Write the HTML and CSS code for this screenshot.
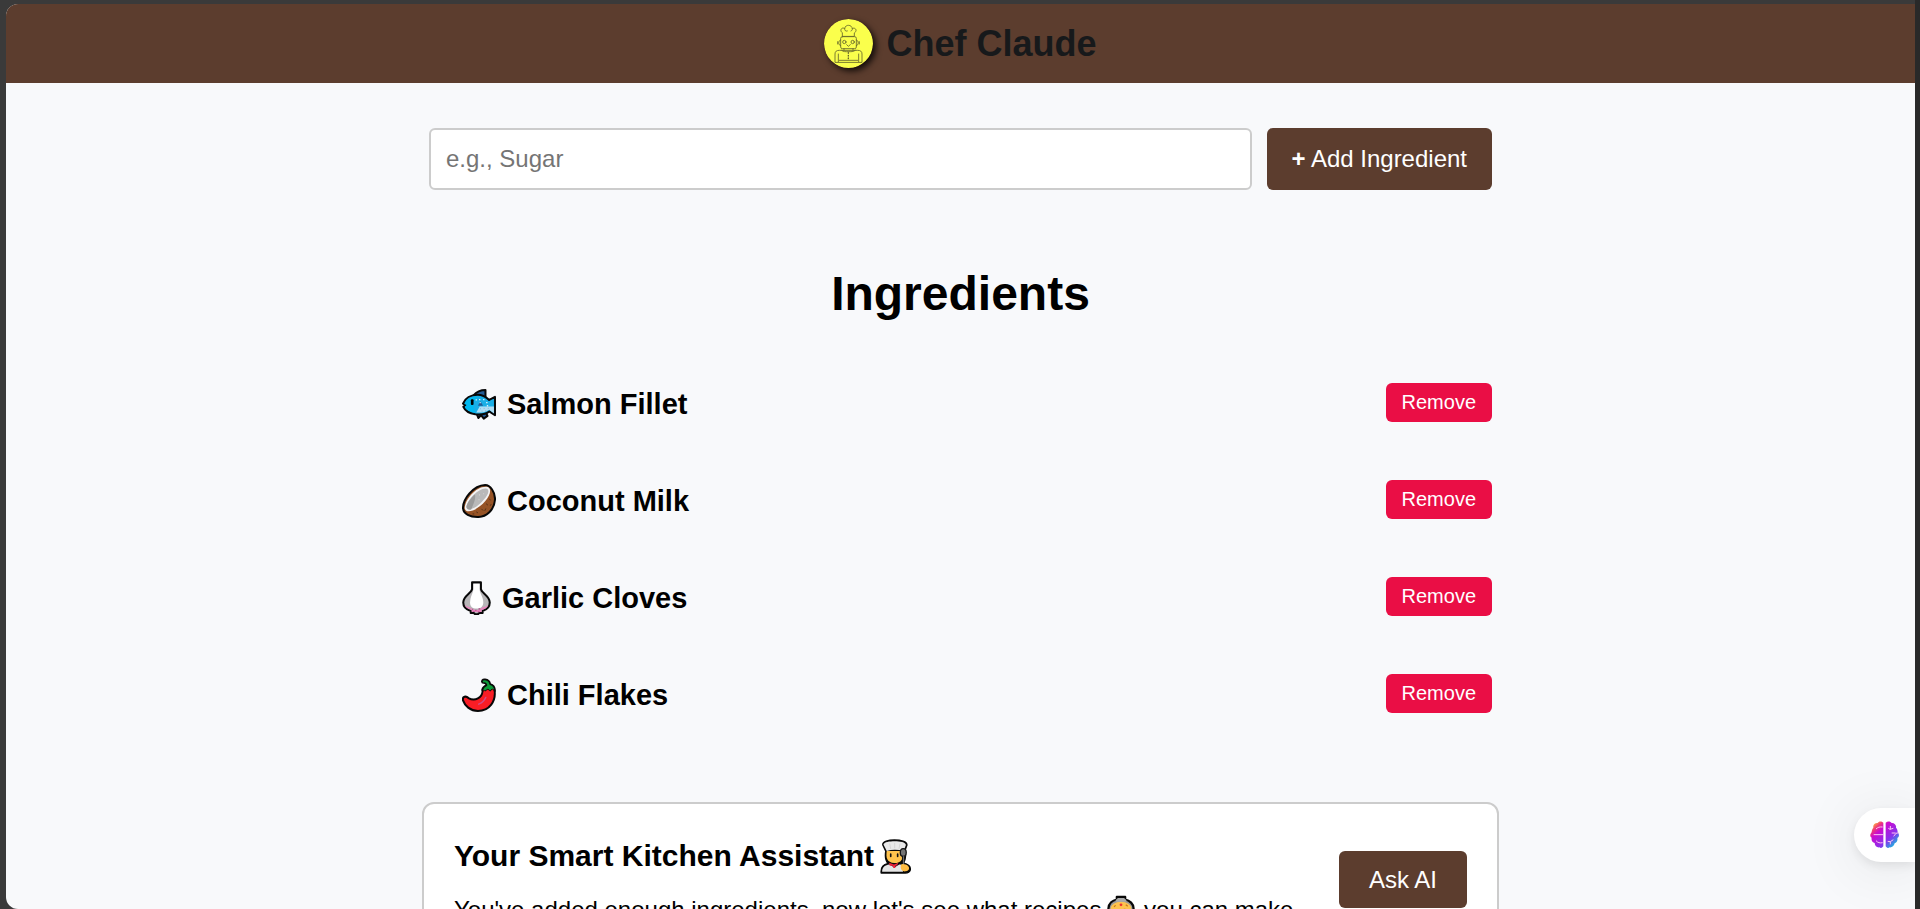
FILE: index.html
```html
<!DOCTYPE html>
<html lang="en">
<head>
    <meta charset="UTF-8">
    <meta name="viewport" content="width=device-width, initial-scale=1.0">
    <title>Chef Claude</title>
    <link rel="stylesheet" href="styles.css">
</head>
<body>
    <div class="window">
        <header>
            <svg class="logo" viewBox="0 0 147 147" aria-hidden="true">
                <circle cx="73.5" cy="73.5" r="73.5" fill="#faff4c"/>
                <g fill="none" stroke="#68692c" stroke-width="2.6" stroke-linecap="round" stroke-linejoin="round">
                    <path d="M55 51V41C49 38 49 28 57 27C60 27 61 28 62 29C63 21 69 19 73 19C80 19 84 23 85 29C91 25 97 30 96 35C95 39 92 41 91 42V51ZM62 29C61 34 65 38 70 36M85 29C86 32 84 35 81 36"/>
                    <rect x="50" y="53" width="47" height="36" rx="5"/>
                    <path d="M50 63C42 63 42 80 50 80M97 63C105 63 105 80 97 80M41 68V75M106 68V75"/>
                    <circle cx="61" cy="69" r="5"/>
                    <circle cx="86" cy="69" r="5"/>
                    <path d="M68 77L73 82L79 77M60 89V94M87 89V94"/>
                    <path d="M33 129V105C33 97 38 94 46 94H101C109 94 114 97 114 105V129ZM43 128V105M104 128V105M46 124H101M53 94C58 99 65 98 72 98C81 98 88 99 94 94"/>
                    <path d="M73 101V103M73 109V111M73 117V119" stroke-width="4"/>
                </g>
            </svg>
            <span class="brand">Chef Claude</span>
        </header>

        <main>
            <form class="add-form" onsubmit="return false">
                <input type="text" name="ingredient" placeholder="e.g., Sugar" aria-label="Add ingredient">
                <button type="submit"><b>+</b> Add Ingredient</button>
            </form>

            <section class="ingredients">
                <h1>Ingredients</h1>
                <ul>
                    <li>
                        <h3>
                            <svg class="emoji" viewBox="0 0 100 100" aria-hidden="true">
                                <g stroke="#080808" stroke-width="6" stroke-linejoin="round">
                                    <path d="M34 25C43 14 57 9 69 9V31Z" fill="#245b94"/>
                                    <path d="M42 75L48 91L56 83L64 93L75 85L70 74Z" fill="#245b94"/>
                                    <path d="M3 49C9 33 26 23 46 23C61 23 70 29 80 38L97 29V83L80 72C70 80 55 82 39 80C20 77 8 67 4 58L10 53Z" fill="#19aee6"/>
                                </g>
                                <path d="M7 50C14 34 29 28 45 28C34 41 30 57 39 76C23 74 12 67 8 59L15 53Z" fill="#00b9f0"/>
                                <path d="M52 57H94V78L80 67C70 75 57 76 42 75Z" fill="#afddf4"/>
                                <path d="M47 55L54 42L62 55Z" fill="#245b94"/>
                                <rect x="26" y="36" width="8" height="17" rx="3"/>
                                <path d="M40 38H44M50 37H54M62 37H66M52 46H55M71 46H75M73 55H77" stroke="#d7f4ff" stroke-width="4"/>
                                <path d="M53 64H55M64 63H66M76 63H78M58 71H60M69 70H71" stroke="#538dba" stroke-width="2"/>
                            </svg>
                            <span>Salmon Fillet</span>
                        </h3>
                        <button class="remove" type="button">Remove</button>
                    </li>
                    <li>
                        <h3>
                            <svg class="emoji" viewBox="0 0 100 100" aria-hidden="true">
                                <path d="M3 72C2 45 33 4 68 3C83 3 98 24 97 46C95 76 72 98 45 97C24 97 5 89 3 72Z" fill="#965325" stroke="#080808" stroke-width="6"/>
                                <path d="M8 72C8 47 40 7 71 8C89 8 85 32 68 51C48 75 13 91 8 72Z" fill="#f4f3f3"/>
                                <path d="M13 68C15 48 47 13 69 13C84 14 78 32 63 47C45 69 18 83 13 68Z" fill="#b9b9b9"/>
                                <path d="M38 31C42 43 33 61 27 75C18 77 13 73 13 67C15 56 26 41 38 31Z" fill="#9b9b9b"/>
                                <path d="M51 32H53M49 46H51M63 29H65" stroke="#dedede" stroke-width="3"/>
                                <path d="M80 43L84 48M71 58L76 62M86 59L83 64M57 73L62 78M70 72L67 79M42 82L47 85M31 88H36" stroke="#3a2412" stroke-width="2"/>
                            </svg>
                            <span>Coconut Milk</span>
                        </h3>
                        <button class="remove" type="button">Remove</button>
                    </li>
                    <li>
                        <h3>
                            <svg class="emoji emoji-narrow" viewBox="0 0 84 100" aria-hidden="true">
                                <path d="M29 4H55V24C57 36 81 44 81 63C81 75 72 84 60 88L60 94H50L46 98H38L34 94H25V88C12 84 3 75 3 63C3 44 27 36 29 24Z" fill="#b8b6b8" stroke="#080808" stroke-width="6" stroke-linejoin="round"/>
                                <path d="M33 8H51V25C53 39 62 47 62 63C62 74 55 81 43 81C29 81 23 74 23 63C23 48 31 37 33 25Z" fill="#fff"/>
                                <path d="M7 70C14 77 19 75 26 80C35 87 50 87 58 79C65 75 71 77 77 70C74 79 67 83 57 85V91H28V85C17 82 10 79 7 70Z" fill="#e884bd"/>
                                <path d="M29 83H32M38 86H42M48 82H53M33 90H36M46 91H51" stroke="#a94c84" stroke-width="3"/>
                            </svg>
                            <span>Garlic Cloves</span>
                        </h3>
                        <button class="remove" type="button">Remove</button>
                    </li>
                    <li>
                        <h3>
                            <svg class="emoji" viewBox="0 0 100 100" aria-hidden="true">
                                <path d="M61 36C67 26 86 24 95 34C102 68 80 97 47 97C24 97 8 81 3 66C0 54 12 52 19 59C38 69 60 59 61 36Z" fill="#f91d25" stroke="#080808" stroke-width="6" stroke-linejoin="round"/>
                                <path d="M59 35C61 28 65 24 72 21C71 15 67 14 60 14C56 9 60 3 68 4C77 5 82 11 83 18C92 20 97 27 97 38L89 34L83 40L76 34L68 40Z" fill="#0b9936" stroke="#080808" stroke-width="5" stroke-linejoin="round"/>
                                <path d="M64 35C64 46 61 57 52 64L84 64C92 55 94 45 92 34L89 34L83 40L76 34L68 40Z" fill="#f91d25"/>
                                <path d="M49 77C58 74 66 66 70 57" fill="none" stroke="#d34b86" stroke-width="4" stroke-linecap="round"/>
                            </svg>
                            <span>Chili Flakes</span>
                        </h3>
                        <button class="remove" type="button">Remove</button>
                    </li>
                </ul>
            </section>

            <section class="assistant">
                <div class="assistant-text">
                    <h2>
                        <span>Your Smart Kitchen Assistant</span>
                        <svg class="cook" viewBox="0 0 96 106" aria-hidden="true">
                            <path d="M3 103C1 84 10 77 24 74C15 64 15 48 17 37L8 18C6 8 26 3 43 3C61 3 83 7 81 19L74 38C79 52 76 65 70 73C84 75 94 83 91 95C89 102 84 103 76 103Z" fill="#080808" stroke="#080808" stroke-width="4" stroke-linejoin="round"/>
                            <path d="M20 36C17 57 20 70 43 73C65 72 72 59 70 36Z" fill="#ffc34d"/>
                            <path d="M10 17C12 9 28 7 44 7C61 7 77 10 78 18L71 36C54 31 35 31 20 36Z" fill="#e9e9e9"/>
                            <path d="M29 14L32 30M60 14L57 30M44 12V28" stroke="#d6d6d6" stroke-width="3"/>
                            <path d="M6 99C6 84 15 79 28 77L43 86L58 77L69 78V99Z" fill="#e5e5e5"/>
                            <path d="M27 72L42 77L55 72L51 80L46 81V88H40L38 81L29 81Z" fill="#ee233b"/>
                            <path d="M32 46V53M53 46V53" stroke="#111" stroke-width="5" stroke-linecap="round"/>
                            <path d="M70 47V88" stroke="#161616" stroke-width="8"/>
                            <ellipse cx="70" cy="41" rx="9" ry="12" fill="#747474" stroke="#161616" stroke-width="4"/>
                            <path d="M71 52V79" stroke="#777" stroke-width="3"/>
                            <path d="M63 79C67 73 73 78 78 77C91 82 91 96 77 98C67 99 60 92 63 79Z" fill="#ffbd43"/>
                        </svg>
                    </h2>
                    <p>You've added enough ingredients, now let's see what recipes<svg class="pot" viewBox="0 0 100 100" aria-hidden="true">
                        <path d="M5 48C6 30 20 19 35 16V7H65V16C81 19 95 32 95 48L90 76C80 94 20 94 10 76Z" fill="#999" stroke="#080808" stroke-width="8" stroke-linejoin="round"/>
                        <ellipse cx="50" cy="48" rx="37" ry="24" fill="#ffc34d"/>
                        <path d="M30 19L39 11H61L70 19L66 24H34Z" fill="#aaa"/>
                        <circle cx="50" cy="35" r="5" fill="#e33"/>
                        <path d="M25 42L31 37M67 35L74 40M36 52H44M60 51H66" stroke="#c8761a" stroke-width="4"/>
                    </svg> you can make</p>
                </div>
                <button class="ask" type="button">Ask AI</button>
            </section>
        </main>

        <button class="brain-tab" type="button" aria-label="Open assistant">
            <svg viewBox="0 0 87 84" aria-hidden="true">
                <defs>
                    <linearGradient id="brain" x1="0" y1="0" x2="1" y2="1">
                        <stop offset="0.1" stop-color="#ffb03b"/>
                        <stop offset="0.22" stop-color="#ee3979"/>
                        <stop offset="0.34" stop-color="#cb0bd0"/>
                        <stop offset="0.66" stop-color="#8734ed"/>
                        <stop offset="0.86" stop-color="#25a9df"/>
                    </linearGradient>
                </defs>
                <path fill="url(#brain)" d="M40 5C34-1 25 1 23 6C15 5 8 12 10 20C5 25 6 31 4 35C-1 40 0 47 5 50C3 60 8 65 14 66C14 75 21 80 28 79C34 83 38 79 40 76ZM47 5C53-1 62 1 65 6C73 5 80 13 78 20C84 25 81 30 84 35C89 41 87 48 82 51C84 60 79 65 74 67C72 76 65 80 59 79C53 83 49 79 47 76Z"/>
                <path d="M11 41H40M18 24C23 19 29 17 38 18M18 59C23 65 30 67 38 65M55 22L60 25L70 22M61 25V15M86 35L78 37L71 46M65 36H77M53 61L61 62L70 56M61 62V70" fill="none" stroke="#ffc5f3" stroke-width="3"/>
            </svg>
        </button>
    </div>
</body>
</html>
```

FILE: styles.css
```css
* {
    box-sizing: border-box;
}

body {
    margin: 0;
    height: 100vh;
    padding: 4px 5px 0 6px;
    overflow: hidden;
    background: linear-gradient(to left, #292929 5px, #3a3a3a 5px);
    font-family: "Liberation Sans", Arial, sans-serif;
    font-size: 24px;
    color: #000;
}

button,
input {
    font: inherit;
}

button {
    border: none;
    border-radius: 6px;
    background-color: #5c3d2e;
    color: #fff;
    cursor: pointer;
}

.window {
    position: relative;
    height: 100%;
    overflow: hidden;
    border-radius: 12px 0 0 12px;
    background-color: #f8f9fb;
}

header {
    display: flex;
    justify-content: center;
    align-items: center;
    gap: 13px;
    padding: 15px;
    background-color: #5c3d2e;
}

.logo {
    width: 49px;
    height: 49px;
    border-radius: 50%;
    box-shadow: 3px 3px 6px #000000cc;
}

.brand {
    font-size: 36px;
    line-height: 42px;
    font-weight: bold;
    color: #17191b;
}

main {
    width: 56%;
    min-width: 900px;
    margin: 0 auto;
    padding-top: 45px;
}

.add-form {
    display: flex;
    gap: 15px;
    padding: 0 3px;
}

.add-form input {
    flex: 1;
    min-width: 0;
    padding: 15px;
    border: 2px solid #ccc;
    border-radius: 6px;
    background-color: #fff;
}

.add-form input::placeholder {
    color: #757575;
}

.add-form button {
    height: 62px;
    padding: 0 25px;
}

.ingredients {
    padding: 0 3px;
}

h1 {
    margin: 76px 0 61px;
    font-size: 48px;
    line-height: 56px;
    text-align: center;
}

ul {
    display: flex;
    flex-direction: column;
    gap: 58px;
    margin: 0;
    padding: 0 0 0 33px;
    list-style: none;
}

li {
    display: flex;
    justify-content: space-between;
    align-items: center;
    height: 39px;
}

h3 {
    display: flex;
    align-items: center;
    gap: 11px;
    margin: 0;
    padding-top: 2px;
    font-size: 29px;
    line-height: 34px;
}

.emoji {
    width: 34px;
    height: 34px;
}

.emoji-narrow {
    width: 29px;
}

.remove {
    height: 39px;
    padding: 0 16px;
    background-color: #ea0e45;
    font-size: 20px;
}

.assistant {
    display: flex;
    justify-content: space-between;
    align-items: flex-start;
    gap: 30px;
    margin: 89px -4px 0;
    padding: 34px 30px;
    border: 2px solid #ccc;
    border-radius: 12px;
    background-color: #fff;
}

h2 {
    display: flex;
    align-items: center;
    gap: 6px;
    margin: 0 0 20px;
    font-size: 30px;
    line-height: 36px;
}

.cook {
    width: 32px;
    height: 35px;
}

p {
    margin: 0;
    line-height: 32px;
}

.pot {
    width: 28px;
    height: 28px;
    margin: 0 2px 0 6px;
    vertical-align: -5px;
}

.ask {
    height: 57px;
    margin-top: 13px;
    padding: 0 30px;
}

/* tab stuck to the right edge, over the page */
.brain-tab {
    position: absolute;
    right: 0;
    bottom: 47px;
    display: flex;
    align-items: center;
    padding: 13px 16px;
    border-radius: 27px 0 0 27px;
    background-color: #fff;
    box-shadow: 0 4px 10px #00000014, 0 6px 60px #00000018;
}

.brain-tab svg {
    width: 29px;
    height: 28px;
}
```
